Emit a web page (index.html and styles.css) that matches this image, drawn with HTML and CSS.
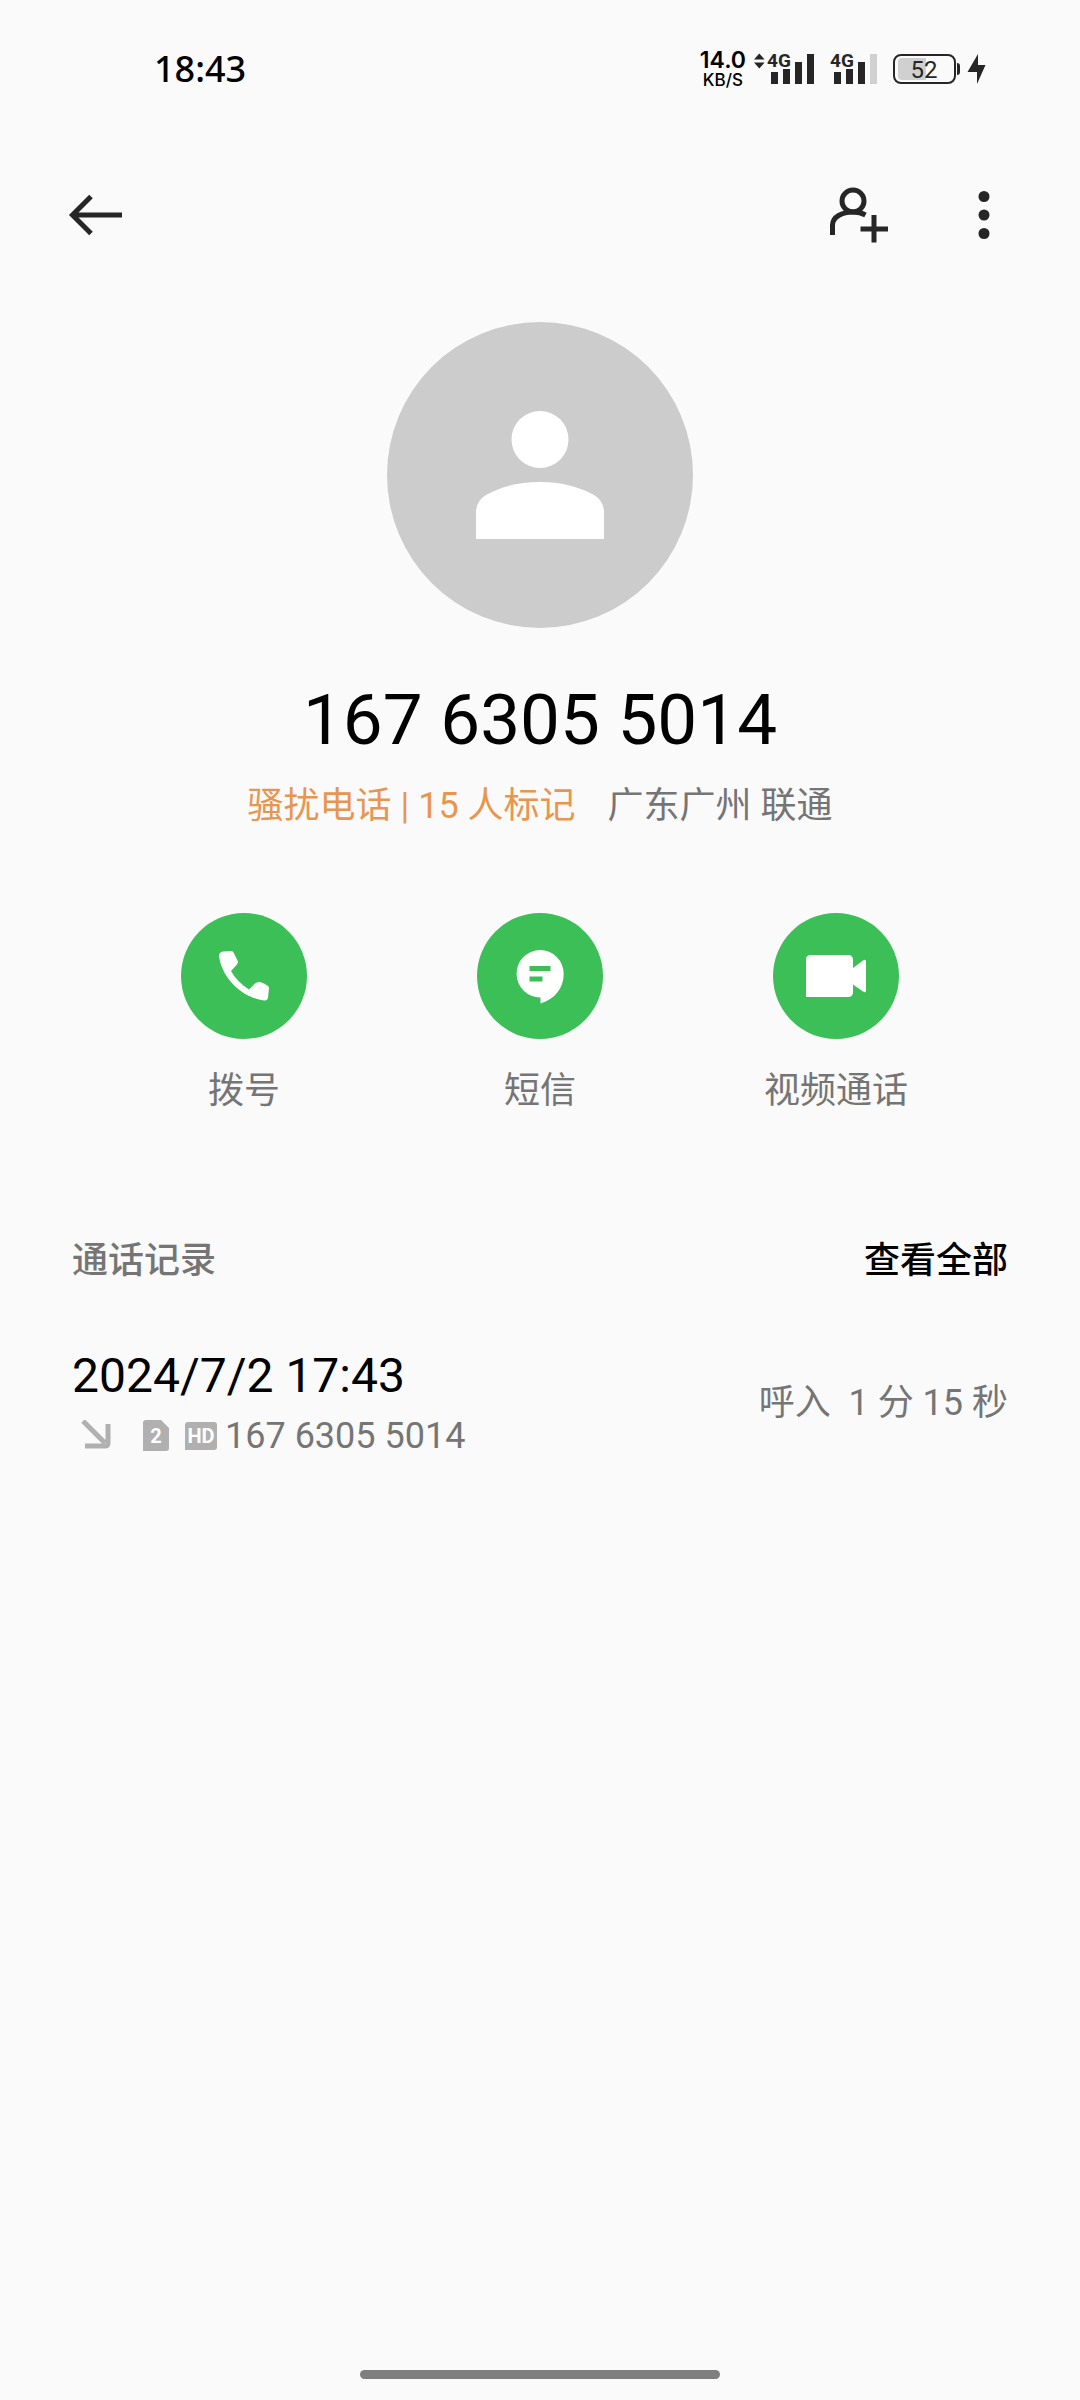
FILE: index.html
```
<!DOCTYPE html>
<html lang="zh-CN">
<head>
  <meta charset="UTF-8">
  <meta name="viewport" content="width=device-width, initial-scale=1">
  <title>167 6305 5014</title>
  <link rel="stylesheet" href="styles.css">
</head>
<body>
<div class="statusbar">
  <time class="clock">18:43</time>
  <div class="status-icons">
    <div class="netspeed"><b>14.0</b><span>KB/S</span></div>
    <svg class="signal" width="60" height="48" viewBox="0 -6 60 48">
      <path d="M0 8.500l5.300-6 5.300 6zM0 11.500h10.600l-5.300 6z"/>
      <text x="13" y="16">4G</text>
      <path d="M17 21h7v12h-7zM29 18h7v15h-7zM41 11h7v22h-7zM53 3h7v30h-7z"/>
    </svg>
    <svg class="signal second" width="47" height="48" viewBox="0 -6 47 48">
      <text x="0" y="16">4G</text>
      <path d="M4 21h7v12H4zM16 18h7v15h-7zM28 11h7v22h-7z"/>
      <path class="off" d="M40 3h7v30h-7z"/>
    </svg>
    <svg class="battery" width="68" height="32" viewBox="0 0 68 32">
      <path class="level" d="M9 5h24v22H9q-4 0-4-4V9q0-4 4-4z"/>
      <rect class="shell" x="1" y="2" width="61" height="28" rx="7"/>
      <path d="M64 10q3 0 3 3v6q0 3-3 3z"/>
      <text x="31" y="25">52</text>
    </svg>
    <svg class="bolt" width="19" height="32" viewBox="0 0 19 32">
      <path d="M11 1v11h7.500L10 31V19H.500z"/>
    </svg>
  </div>
</div>

<header class="toolbar">
  <button class="icon-btn back" type="button" aria-label="返回">
    <svg width="72" height="72" viewBox="0 0 72 72">
      <path d="M31 17.500L12.500 36 31 54.500M13 36h49"/>
    </svg>
  </button>
  <button class="icon-btn" type="button" aria-label="新建联系人">
    <svg width="72" height="72" viewBox="0 0 72 72">
      <circle cx="31" cy="22" r="11"/>
      <path d="M10.500 56V46C10.500 38 20 33 31 33q7 0 12.500 3M52 36v27.500M38.500 50H66"/>
    </svg>
  </button>
  <button class="icon-btn more" type="button" aria-label="更多">
    <svg width="72" height="72" viewBox="0 0 72 72">
      <circle cx="36" cy="17.500" r="5.500"/>
      <circle cx="36" cy="36" r="5.500"/>
      <circle cx="36" cy="54.500" r="5.500"/>
    </svg>
  </button>
</header>

<main>
  <section class="profile">
    <svg class="avatar" viewBox="0 0 306 306">
      <circle class="avatar-bg" cx="153" cy="153" r="153"/>
      <circle cx="153" cy="117.500" r="28.500"/>
      <path d="M89 217V190q0-11 10-17c17-9 33-13 54-13s37 4 54 13q10 6 10 17v27z"/>
    </svg>
    <h1 class="number">167 6305 5014</h1>
    <p class="info"><span class="mark">骚扰电话 | 15 人标记</span><span>广东广州 联通</span></p>
  </section>

  <nav class="actions">
    <button class="action" type="button">
      <svg width="126" height="126" viewBox="0 0 126 126">
        <path d="M42 38.500l8.500-.500q1.500 0 2 1.500l4 8q1 2-.500 4l-6 6.500C54 65 60 71.500 68 76.500l6-6q2-2 5-1.500 4 1 7.500 3.500 1.500 1 1.500 3l-1 9q-.500 3.500-4 3C62 85 41 66 38 43q0-4 4-4.500z"/>
      </svg>
      <span>拨号</span>
    </button>
    <button class="action" type="button">
      <svg width="126" height="126" viewBox="0 0 126 126">
        <path d="M63 37a23.700 23.700 0 0 1 23.700 23.700C86.700 75 78 86 63.500 90.500v-6.100A23.700 23.700 0 1 1 63 37z"/>
        <path class="line" d="M52.500 53h21v5h-21zM52.500 63.500h13v5h-13z"/>
      </svg>
      <span>短信</span>
    </button>
    <button class="action" type="button">
      <svg width="126" height="126" viewBox="0 0 126 126">
        <path d="M37.500 42H75q5 0 5 5v8l10-7.500q3-2 3 1.500v28q0 3.500-3 1.500L80 71.500V79q0 5-5 5H33V46.500q0-4.500 4.500-4.500z"/>
      </svg>
      <span>视频通话</span>
    </button>
  </nav>

  <section class="records">
    <div class="records-head">
      <h2>通话记录</h2>
      <a href="#all">查看全部</a>
    </div>
    <div class="record">
      <div class="record-main">
        <div class="record-date">2024/7/2 17:43</div>
        <div class="record-from">
          <svg class="incoming" width="32" height="32" viewBox="0 0 32 32">
            <path d="M3 1l22 22M5 26h20q3 0 3-3V4"/>
          </svg>
          <svg class="sim" width="26" height="32" viewBox="0 0 26 32">
            <path d="M3 0h15l8 8v20q0 3-3 3H0V3q0-3 3-3z"/>
            <text x="13" y="23">2</text>
          </svg>
          <svg class="hd" width="32" height="32" viewBox="0 0 32 32">
            <path d="M3 2h26q3 0 3 3v22q0 3-3 3H0V5q0-3 3-3z"/>
            <text x="16" y="23">HD</text>
          </svg>
          <span>167 6305 5014</span>
        </div>
      </div>
      <div class="record-time">呼入  1 分 15 秒</div>
    </div>
  </section>
</main>

<div class="homebar"></div>
</body>
</html>
```
FILE: styles.css
```
* {
  box-sizing: border-box;
}

body {
  display: flex;
  flex-direction: column;
  min-height: 100vh;
  margin: 0;
  background-color: #fafafa;
  color: #757575;
  font-family: Roboto, "Noto Sans CJK SC", sans-serif;
  font-size: 36px;
  line-height: 48px;
}

h1, h2, p {
  margin: 0;
  font-weight: 400;
}

svg {
  display: block;
}

button {
  padding: 0;
  border: 0;
  background: none;
  color: inherit;
  font: inherit;
  cursor: pointer;
}

/* 状态栏 */
.statusbar {
  display: flex;
  justify-content: space-between;
  align-items: center;
  height: 138px;
  padding: 0 94px 0 154px;
}

.clock {
  color: #000000;
  font-family: "Noto Sans", sans-serif;
  font-weight: 500;
}

.status-icons {
  display: flex;
  align-items: center;
  fill: #262626;
}

.netspeed {
  display: flex;
  flex-direction: column;
  align-items: center;
  margin-right: 8px;
  color: #000000;
  font-family: Inter, sans-serif;
  font-size: 17px;
  font-weight: 500;
  line-height: 17px;
}

.netspeed b {
  font-size: 23px;
  font-weight: 600;
  line-height: 23px;
}

.signal text {
  font-size: 19px;
  font-weight: 700;
}

.signal.second {
  margin: 0 16px;
}

.signal .off,
.battery .level {
  fill: #d0d0d0;
}

.battery .shell {
  fill: none;
  stroke: #262626;
  stroke-width: 2;
}

.battery text {
  font-size: 24px;
  text-anchor: middle;
}

.bolt {
  margin-left: 6px;
}

/* 工具栏 */
.toolbar {
  display: flex;
  align-items: center;
  gap: 54px;
  height: 154px;
  padding: 0 60px;
}

.icon-btn svg {
  fill: none;
  stroke: #262626;
  stroke-width: 5;
}

.icon-btn.back {
  margin-right: auto;
}

.icon-btn.more svg {
  fill: #262626;
  stroke: none;
}

/* 联系人 */
.profile {
  display: flex;
  flex-direction: column;
  align-items: center;
  padding-top: 30px;
}

.avatar {
  width: 306px;
  fill: #ffffff;
}

.avatar-bg {
  fill: #cccccc;
}

.number {
  margin: 50px 0 20px;
  color: #000000;
  font-size: 71px;
  line-height: 84px;
}

.info {
  display: flex;
  gap: 32px;
}

.mark {
  color: #e8964f;
}

.actions {
  display: grid;
  grid-template-columns: repeat(3, 1fr);
  margin-top: 83px;
  padding: 0 96px;
}

.action {
  display: flex;
  flex-direction: column;
  align-items: center;
  gap: 28px;
}

.action svg {
  border-radius: 50%;
  background-color: #3cbf57;
  fill: #ffffff;
}

.action .line {
  fill: #3cbf57;
}

/* 通话记录 */
.records {
  padding: 122px 72px 0;
}

.records-head {
  display: flex;
  justify-content: space-between;
}

.records-head h2,
.records-head a {
  font-size: 36px;
  font-weight: 500;
}

.records-head a {
  color: #000000;
  text-decoration: none;
}

.record {
  display: flex;
  justify-content: space-between;
  align-items: center;
  margin-top: 61px;
}

.record-date {
  margin-bottom: 6px;
  color: #000000;
  font-size: 48px;
  line-height: 60px;
}

.record-from {
  display: flex;
  align-items: center;
  fill: #b0b0b0;
}

.record-from text {
  fill: #ffffff;
  font-size: 20px;
  font-weight: 700;
  text-anchor: middle;
}

.incoming {
  margin: 0 31px 0 8px;
  fill: none;
  stroke: #b0b0b0;
  stroke-width: 5;
}

.hd {
  margin: 0 8px 0 16px;
}

.record-time {
  white-space: pre;
}

.homebar {
  width: 33.3333%;
  height: 9px;
  margin: auto auto 21px;
  border-radius: 5px;
  background-color: #7f7f7f;
}
```
